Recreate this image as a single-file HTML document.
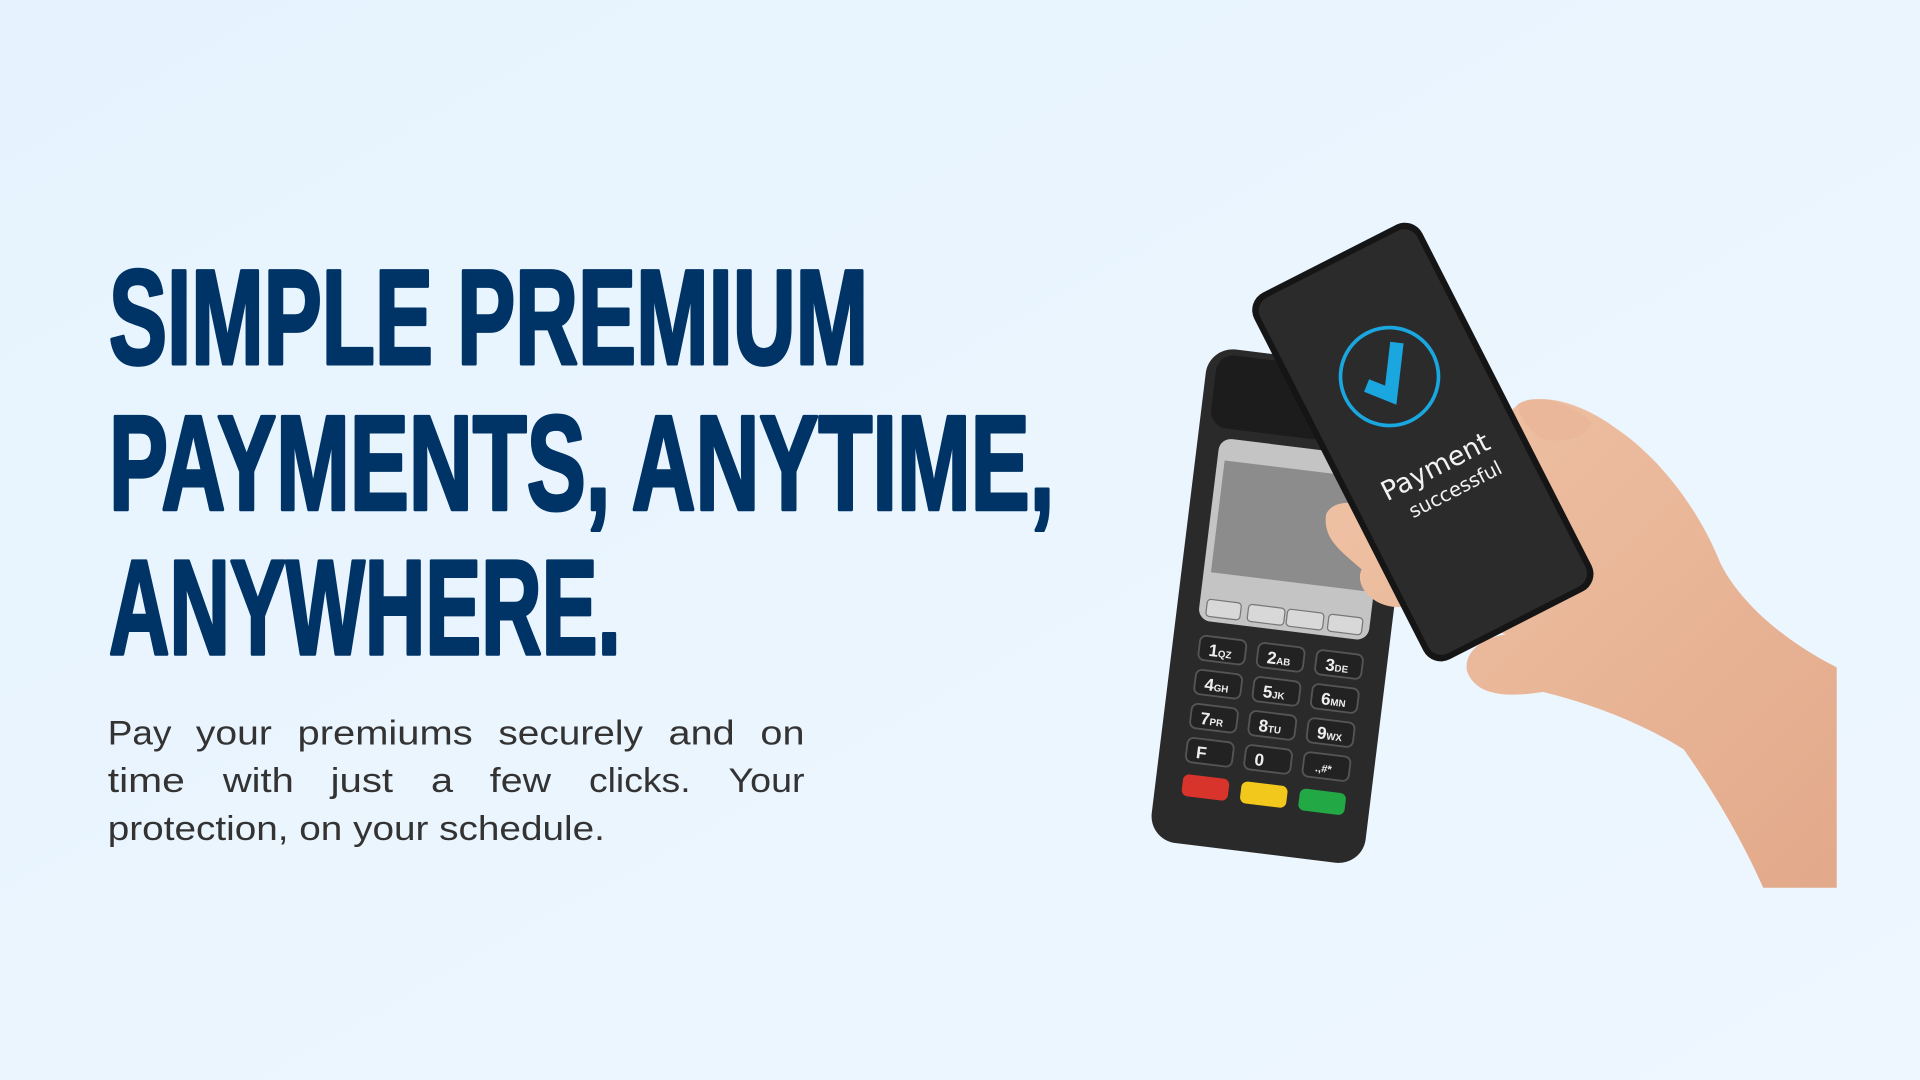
<!DOCTYPE html>
<html><head><meta charset="utf-8"><style>
html,body{margin:0;padding:0;width:1920px;height:1080px;overflow:hidden;background:#e9f4fe}
svg{display:block}
</style></head><body>
<svg width="1920" height="1080" viewBox="0 0 1568 882" xmlns="http://www.w3.org/2000/svg">
<defs>
<linearGradient id="bg" x1="0" y1="0" x2="1" y2="1">
<stop offset="0" stop-color="#e6f3fe"/><stop offset="0.5" stop-color="#eaf5fe"/><stop offset="1" stop-color="#eef7ff"/>
</linearGradient>
<linearGradient id="skin" x1="0" y1="0" x2="1" y2="1">
<stop offset="0" stop-color="#f0c3a6"/><stop offset="1" stop-color="#e2a98a"/>
</linearGradient>
</defs>
<rect width="1568" height="882" fill="url(#bg)"/>

<g fill="#003366" stroke="#003366" stroke-width="3" stroke-linejoin="round" font-family="Liberation Sans, sans-serif" font-weight="bold" font-size="110">
<text x="89" y="297" textLength="620" lengthAdjust="spacingAndGlyphs">SIMPLE PREMIUM</text>
<text x="89" y="416" textLength="772" lengthAdjust="spacingAndGlyphs">PAYMENTS, ANYTIME,</text>
<text x="89" y="534" textLength="418" lengthAdjust="spacingAndGlyphs">ANYWHERE.</text>
</g>
<g fill="#333" font-family="Liberation Sans, sans-serif" font-size="28">
<text x="88" y="608" textLength="52" lengthAdjust="spacingAndGlyphs">Pay</text>
<text x="160" y="608" textLength="62" lengthAdjust="spacingAndGlyphs">your</text>
<text x="243" y="608" textLength="143" lengthAdjust="spacingAndGlyphs">premiums</text>
<text x="407" y="608" textLength="118" lengthAdjust="spacingAndGlyphs">securely</text>
<text x="546" y="608" textLength="54" lengthAdjust="spacingAndGlyphs">and</text>
<text x="621" y="608" textLength="36" lengthAdjust="spacingAndGlyphs">on</text>
<text x="88" y="647" textLength="63" lengthAdjust="spacingAndGlyphs">time</text>
<text x="182" y="647" textLength="58" lengthAdjust="spacingAndGlyphs">with</text>
<text x="270" y="647" textLength="51" lengthAdjust="spacingAndGlyphs">just</text>
<text x="352" y="647" textLength="18" lengthAdjust="spacingAndGlyphs">a</text>
<text x="400" y="647" textLength="50" lengthAdjust="spacingAndGlyphs">few</text>
<text x="481" y="647" textLength="83" lengthAdjust="spacingAndGlyphs">clicks.</text>
<text x="595" y="647" textLength="62" lengthAdjust="spacingAndGlyphs">Your</text>
<text x="88" y="686" textLength="406" lengthAdjust="spacingAndGlyphs">protection, on your schedule.</text>
</g>

<!-- terminal -->
<g transform="translate(1050,495) rotate(7)">
<rect x="-88" y="-203" width="176" height="406" rx="22" fill="#2a2a2a"/>
<rect x="-80" y="-198" width="160" height="60" rx="14" fill="#1c1c1c"/>
<rect x="-70" y="-130" width="140" height="150" rx="10" fill="#c4c4c4"/>
<rect x="-64" y="-112" width="128" height="92" fill="#8c8c8c"/>
<g fill="#d8d8d8" stroke="#777" stroke-width="1">
<rect x="-64" y="2" width="28" height="14" rx="3"/><rect x="-30" y="2" width="30" height="14" rx="3"/>
<rect x="2" y="2" width="30" height="14" rx="3"/><rect x="36" y="2" width="28" height="14" rx="3"/>
</g>
<g fill="#222" stroke="#555" stroke-width="1.5">
<rect x="-66" y="32" width="38" height="20" rx="5"/><rect x="-18" y="32" width="38" height="20" rx="5"/><rect x="30" y="32" width="38" height="20" rx="5"/>
<rect x="-66" y="60" width="38" height="20" rx="5"/><rect x="-18" y="60" width="38" height="20" rx="5"/><rect x="30" y="60" width="38" height="20" rx="5"/>
<rect x="-66" y="88" width="38" height="20" rx="5"/><rect x="-18" y="88" width="38" height="20" rx="5"/><rect x="30" y="88" width="38" height="20" rx="5"/>
<rect x="-66" y="116" width="38" height="20" rx="5"/><rect x="-18" y="116" width="38" height="20" rx="5"/><rect x="30" y="116" width="38" height="20" rx="5"/>
</g>
<g fill="#eee" font-family="Liberation Sans, sans-serif" font-weight="bold" font-size="14">
<text x="-58" y="48">1<tspan font-size="8">QZ</tspan></text><text x="-10" y="48">2<tspan font-size="8">AB</tspan></text><text x="38" y="48">3<tspan font-size="8">DE</tspan></text>
<text x="-58" y="76">4<tspan font-size="8">GH</tspan></text><text x="-10" y="76">5<tspan font-size="8">JK</tspan></text><text x="38" y="76">6<tspan font-size="8">MN</tspan></text>
<text x="-58" y="104">7<tspan font-size="8">PR</tspan></text><text x="-10" y="104">8<tspan font-size="8">TU</tspan></text><text x="38" y="104">9<tspan font-size="8">WX</tspan></text>
<text x="-58" y="132">F</text><text x="-10" y="132">0</text><text x="40" y="131" font-size="9">.,#*</text>
</g>
<rect x="-66" y="146" width="38" height="18" rx="5" fill="#d9342b"/>
<rect x="-18" y="146" width="38" height="18" rx="5" fill="#f2c81c"/>
<rect x="30" y="146" width="38" height="18" rx="5" fill="#22a845"/>
</g>

<!-- hand -->
<path d="M1240,330 C1265,318 1300,335 1320,350 C1350,370 1385,410 1405,460 C1425,500 1470,530 1500,545 L1500,725 L1440,725 C1420,680 1395,640 1375,612 C1340,590 1300,575 1260,565 C1230,570 1205,568 1198,548 C1195,530 1215,520 1230,518 L1150,495 C1125,500 1105,480 1112,465 C1095,450 1080,440 1083,420 C1090,405 1115,410 1140,420 Z" fill="url(#skin)"/>

<!-- phone -->
<g transform="translate(1162,361) rotate(-27)">
<rect x="-77" y="-168" width="154" height="336" rx="16" fill="#151515"/>
<rect x="-72" y="-163" width="144" height="326" rx="12" fill="#2b2b2b"/>
<circle cx="0" cy="-60" r="40" fill="none" stroke="#1aa7e0" stroke-width="3"/>
<polyline points="-20,-62 -6,-46 18,-82" fill="none" stroke="#1aa7e0" stroke-width="11" stroke-linecap="butt" stroke-linejoin="miter"/>
<text x="0" y="30" fill="#f2f2f2" font-family="DejaVu Sans, sans-serif" font-size="22" text-anchor="middle">Payment</text>
<text x="6" y="52" fill="#f2f2f2" font-family="DejaVu Sans, sans-serif" font-size="16" text-anchor="middle">successful</text>
</g>
<path d="M1240,330 C1255,320 1285,330 1300,345 C1295,360 1270,362 1258,358 C1248,350 1240,340 1240,330 Z" fill="#eab79a"/>
</svg>
</body></html>
